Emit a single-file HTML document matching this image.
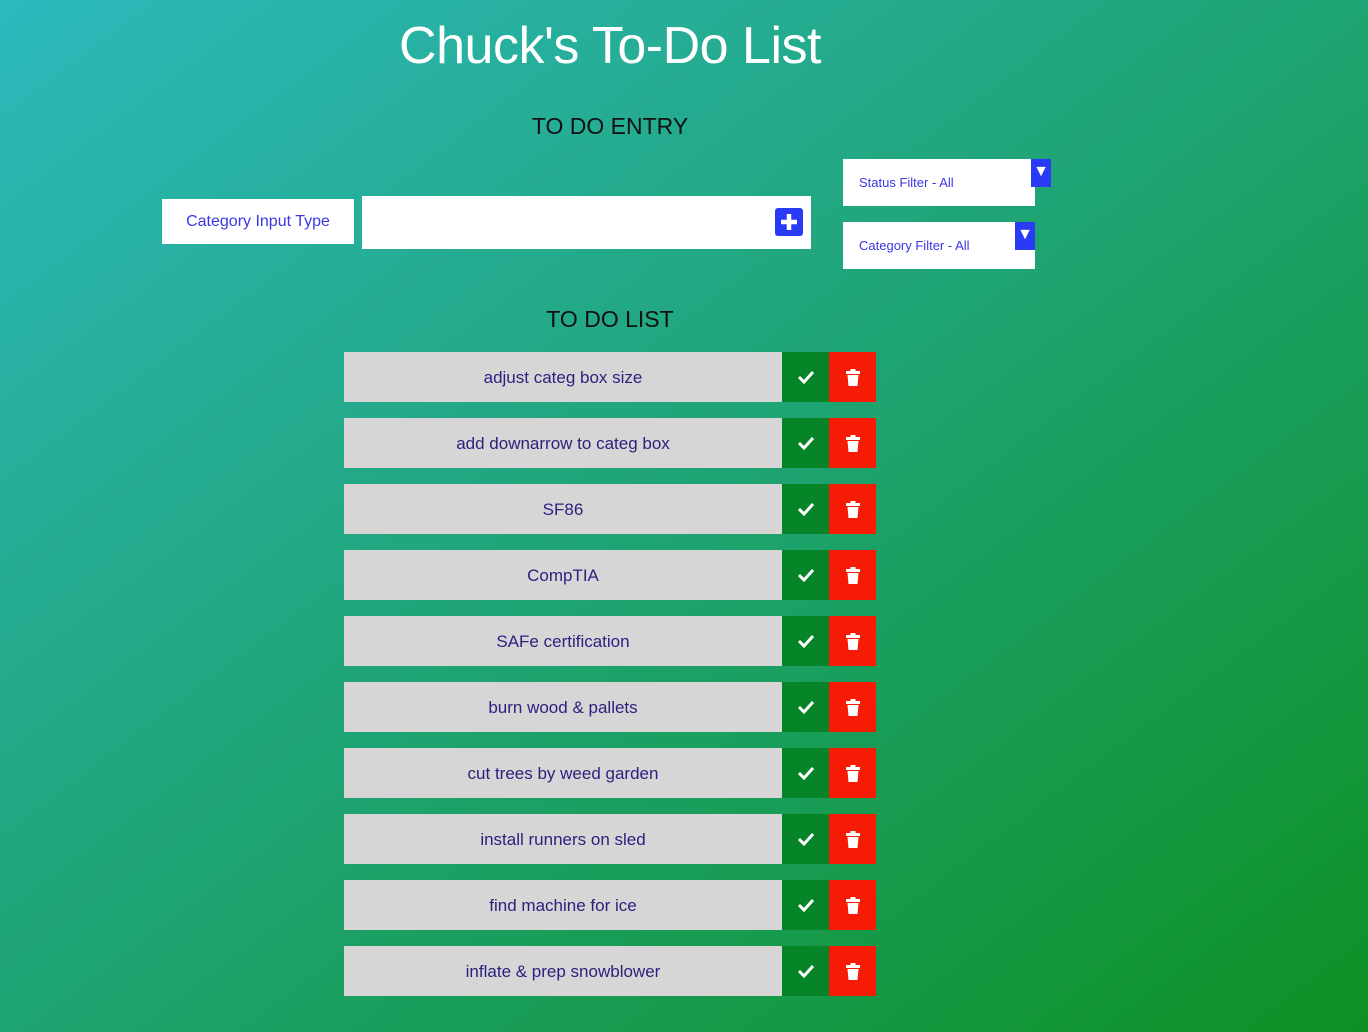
<!DOCTYPE html>
<html><head><style>
body{margin:0;width:1368px;height:1032px;overflow:hidden;background:linear-gradient(to bottom right,#2db9bd 0%,#20a57a 45%,#0d9124 100%);font-family:"Liberation Sans",sans-serif;position:relative}
.a{position:absolute}
h1{position:absolute;left:0;width:1220px;text-align:center;top:16px;margin:0;font-size:52px;font-weight:500;color:#fff;letter-spacing:-0.5px}
.h{position:absolute;left:0;width:1220px;text-align:center;font-size:23px;color:#111}
.box{background:#fff;color:#3b36e6;font-size:15px}
.row{position:absolute;left:344px;width:532px;height:50px;display:flex}
.t{width:438px;background:#d7d5d6;color:#2a237e;font-size:17px;display:flex;align-items:center;justify-content:center;padding-top:1px;box-sizing:border-box}
.g{width:47px;background:#058428;display:flex;align-items:center;justify-content:center}
.r{width:47px;background:#f51b05;display:flex;align-items:center;justify-content:center}
.arr{position:absolute;background:#2a3bf5;color:#fff;width:20px;height:28px;font-size:16px;text-align:center;line-height:26px;top:0}
</style></head><body>
<h1>Chuck's To-Do List</h1>
<div class="h" style="top:113px">TO DO ENTRY</div>
<div class="a box" style="left:162px;top:199px;width:192px;height:45px;line-height:46px;text-align:center;font-size:16px">Category Input Type</div>
<div class="a" style="left:362px;top:196px;width:449px;height:53px;background:#fff">
<div class="a" style="right:8px;top:12px;width:28px;height:28px;background:#2a3bf5;border-radius:3px"><svg width="28" height="28"><path d="M14 6v16M6 14h16" stroke="#fff" stroke-width="4.5"/></svg></div></div>
<div class="a box" style="left:843px;top:159px;width:192px;height:47px;font-size:13px"><span class="a" style="left:16px;top:16px">Status Filter - All</span><div class="arr" style="left:188px">▼</div></div>
<div class="a box" style="left:843px;top:222px;width:192px;height:47px;font-size:13px"><span class="a" style="left:16px;top:16px">Category Filter - All</span><div class="arr" style="left:172px">▼</div></div>
<div class="h" style="top:306px">TO DO LIST</div>
<div id="list"></div>
<script>
var items=["adjust categ box size","add downarrow to categ box","SF86","CompTIA","SAFe certification","burn wood & pallets","cut trees by weed garden","install runners on sled","find machine for ice","inflate & prep snowblower"];
var h="";items.forEach(function(s,i){h+='<div class="row" style="top:'+(352+66*i)+'px"><div class="t">'+s.replace("&","&amp;")+'</div><div class="g"><svg width="18" height="14"><path d="M2 7l5 5 9-10" stroke="#fff" stroke-width="3" fill="none"/></svg></div><div class="r"><svg width="14" height="17"><rect x="0" y="2" width="14" height="3" fill="#fff"/><rect x="4.5" y="0" width="5" height="3" fill="#fff"/><path d="M1.5 6h11l-1 11h-9z" fill="#fff"/></svg></div></div>'});
document.getElementById("list").innerHTML=h;
</script>
</body></html>
